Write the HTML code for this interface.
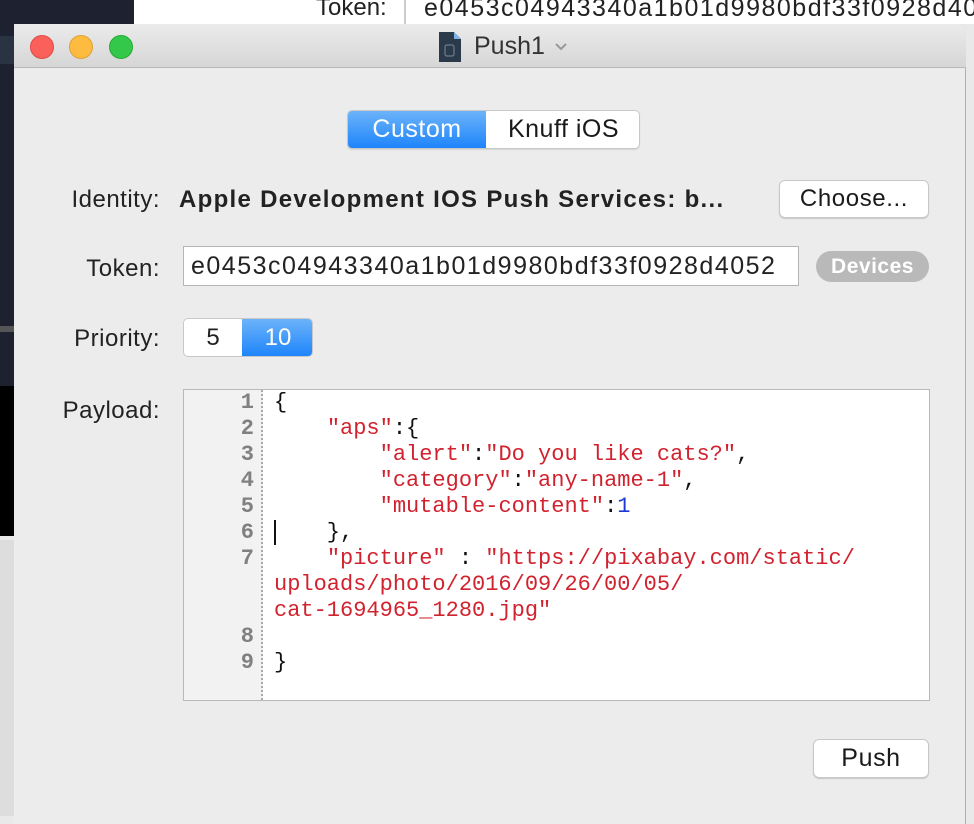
<!DOCTYPE html>
<html><head><meta charset="utf-8"><style>
*{box-sizing:border-box;margin:0;padding:0}
body{width:974px;height:816px;overflow:hidden;position:relative;background:#e9e9e9;font-family:"Liberation Sans",sans-serif;color:#222}
.abs{position:absolute}
.btn{position:absolute;background:#fff;border:1px solid #c8c8c8;border-radius:6px;box-shadow:0 1px 1px rgba(0,0,0,.15);text-align:center;font-size:24px;letter-spacing:0.6px;color:#1a1a1a}
.lbl{position:absolute;font-size:24px;letter-spacing:0.5px;text-align:right;width:200px;left:-40px;color:#222}
.code{position:absolute;font-family:"Liberation Mono",monospace;font-size:22px;line-height:26px;white-space:pre;color:#111}
.r{color:#d1232f}.b{color:#1c39d6}
.gn{position:absolute;font-family:"Liberation Mono",monospace;font-size:22px;line-height:26px;color:#808080;text-align:right;width:60px;left:194px;font-weight:bold}
</style></head><body>
<div class="abs" style="left:0;top:0;width:134px;height:24px;background:#1e2130"></div>
<div class="abs" style="left:134px;top:0;width:840px;height:24px;background:#fff"></div>
<div class="abs" style="left:316px;top:-6px;font-size:24px;color:#222">Token:</div>
<div class="abs" style="left:404px;top:0;width:2px;height:24px;background:#ccc"></div>
<div class="abs" style="left:424px;top:-6px;font-size:25px;letter-spacing:1.5px;color:#222">e0453c04943340a1b01d9980bdf33f0928d4052</div>
<div class="abs" style="left:0;top:24px;width:14px;height:510px;background:#1e2130"></div>
<div class="abs" style="left:0;top:36px;width:14px;height:28px;background:#2a3342"></div>
<div class="abs" style="left:0;top:326px;width:14px;height:6px;background:#555"></div>
<div class="abs" style="left:0;top:386px;width:14px;height:150px;background:#000"></div>
<div class="abs" style="left:0;top:540px;width:14px;height:276px;background:#ddd"></div>
<div class="abs" style="left:14px;top:24px;width:952px;height:800px;background:#ececec;border-radius:6px 6px 0 0;border-right:1px solid #b0b0b0"></div>
<div class="abs" style="left:14px;top:24px;width:952px;height:44px;background:linear-gradient(#ebebeb,#d6d6d6);border-radius:6px 6px 0 0;border-bottom:1px solid #b9b9b9"></div>
<div class="abs" style="left:30px;top:35px;width:24px;height:24px;border-radius:50%;background:#fc605b;border:1px solid #de4a45"></div>
<div class="abs" style="left:69px;top:35px;width:24px;height:24px;border-radius:50%;background:#fdbc40;border:1px solid #dea035"></div>
<div class="abs" style="left:109px;top:35px;width:24px;height:24px;border-radius:50%;background:#34c84a;border:1px solid #27aa35"></div>
<svg class="abs" style="left:437px;top:31px" width="26" height="32"><path d="M2 1H17L24 8V31H2Z" fill="#2b3a4a"/><path d="M17 1L24 8H17Z" fill="#7fb3e8"/><rect x="8" y="14" width="9" height="11" rx="2" fill="none" stroke="#6c7d90" stroke-width="1.2"/></svg>
<div class="abs" style="left:474px;top:32px;font-size:25px;color:#333">Push1</div>
<svg class="abs" style="left:554px;top:42px" width="14" height="10"><path d="M2 2L7 7L12 2" fill="none" stroke="#999" stroke-width="2"/></svg>
<div class="abs" style="left:347px;top:110px;width:293px;height:39px;border:1px solid #c8c8c8;border-radius:5px;background:#fff;overflow:hidden;box-shadow:0 1px 1px rgba(0,0,0,.1)">
<div class="abs" style="left:0;top:0;width:138px;height:39px;background:linear-gradient(#6cb3fa,#1a82fb);color:#fff;font-size:25px;letter-spacing:0.5px;text-align:center;line-height:37px">Custom</div>
<div class="abs" style="left:138px;top:0;width:155px;height:39px;color:#1a1a1a;font-size:25px;letter-spacing:0.5px;text-align:center;line-height:37px">Knuff iOS</div></div>
<div class="lbl" style="top:186px">Identity:</div>
<div class="abs" style="left:179px;top:186px;font-size:24px;font-weight:bold;color:#222;letter-spacing:1.3px;white-space:nowrap">Apple Development IOS Push Services: b...</div>
<div class="btn" style="left:779px;top:180px;width:150px;height:38px;line-height:36px">Choose...</div>
<div class="lbl" style="top:255px">Token:</div>
<div class="abs" style="left:183px;top:246px;width:616px;height:40px;background:#fff;border:1px solid #b5b5b5;font-size:25px;letter-spacing:1.5px;line-height:38px;padding-left:7px;color:#222;overflow:hidden;white-space:nowrap">e0453c04943340a1b01d9980bdf33f0928d4052</div>
<div class="abs" style="left:816px;top:251px;width:113px;height:31px;border-radius:16px;background:#b9b9b9;color:#fff;font-weight:bold;font-size:21px;letter-spacing:0.5px;text-align:center;line-height:31px">Devices</div>
<div class="lbl" style="top:325px">Priority:</div>
<div class="abs" style="left:183px;top:318px;width:130px;height:39px;border:1px solid #c8c8c8;border-radius:5px;background:#fff;overflow:hidden">
<div class="abs" style="left:0;top:0;width:58px;height:39px;font-size:24px;text-align:center;line-height:37px">5</div>
<div class="abs" style="left:58px;top:0;width:72px;height:39px;background:linear-gradient(#6cb3fa,#1a82fb);color:#fff;font-size:24px;text-align:center;line-height:37px">10</div></div>
<div class="lbl" style="top:397px">Payload:</div>
<div class="abs" style="left:183px;top:389px;width:747px;height:312px;background:#fff;border:1px solid #b9b9b9"></div>
<div class="abs" style="left:184px;top:390px;width:79px;height:310px;background:#f2f2f2;border-right:2px dotted #aaa"></div>
<div class="gn" style="top:390px">1<br>2<br>3<br>4<br>5<br>6<br>7<br><br><br>8<br>9</div>
<div class="code" style="left:274px;top:390px">{
    <span class="r">"aps"</span>:{
        <span class="r">"alert"</span>:<span class="r">"Do you like cats?"</span>,
        <span class="r">"category"</span>:<span class="r">"any-name-1"</span>,
        <span class="r">"mutable-content"</span>:<span class="b">1</span>
    },
    <span class="r">"picture"</span> : <span class="r">"https://pixabay.com/static/</span>
<span class="r">uploads/photo/2016/09/26/00/05/</span>
<span class="r">cat-1694965_1280.jpg"</span>

}</div>
<div class="abs" style="left:274px;top:520px;width:2px;height:25px;background:#111"></div>
<div class="btn" style="left:813px;top:739px;width:116px;height:39px;line-height:37px;font-size:25px">Push</div>
</body></html>
